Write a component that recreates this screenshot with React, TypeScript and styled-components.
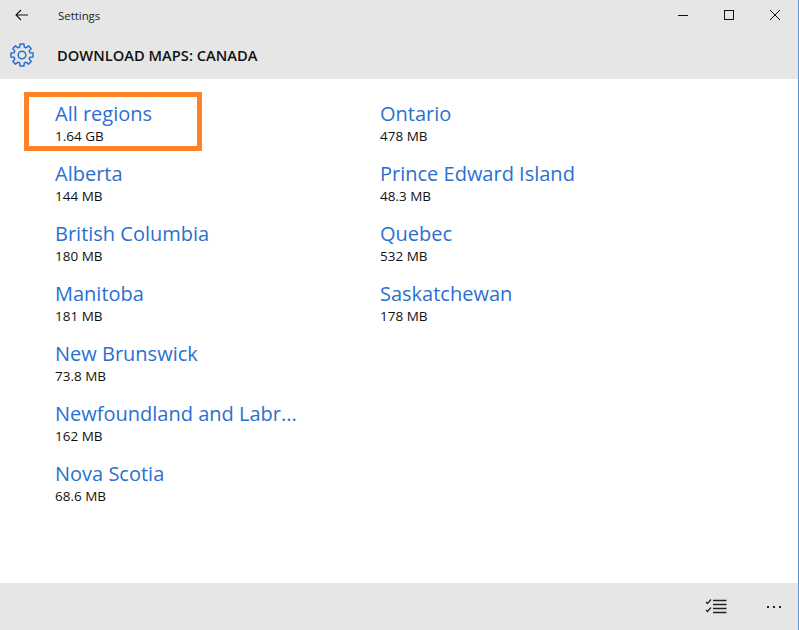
import React from "react";
import styled, { createGlobalStyle } from "styled-components";

const GlobalStyle = createGlobalStyle`
  html, body {
    margin: 0;
    padding: 0;
    background: #fff;
  }
  body {
    font-family: "Open Sans", "Noto Sans", "Liberation Sans", sans-serif;
  }
`;

const Window = styled.div`
  width: 799px;
  height: 630px;
  box-sizing: border-box;
  display: flex;
  flex-direction: column;
  overflow: hidden;
  color: #000;
  border-right: 1px solid #5f92d0;
`;

const TitleBar = styled.div`
  height: 30px;
  flex: none;
  display: flex;
  align-items: center;
  background: #e6e6e6;
`;

const BackButton = styled.div`
  width: 44px;
  height: 30px;
  display: flex;
  align-items: center;
  justify-content: center;
`;

const AppName = styled.div`
  margin-left: 14px;
  font-size: 11.4px;
  color: #222;
`;

const WindowControls = styled.div`
  margin-left: auto;
  display: flex;
`;

const WindowButton = styled.div`
  width: 46px;
  height: 30px;
  display: flex;
  align-items: center;
  justify-content: center;
`;

const Header = styled.div`
  height: 49px;
  flex: none;
  display: flex;
  align-items: center;
  background: #e6e6e6;
  padding-left: 10px;
  gap: 23px;
`;

const HeaderTitle = styled.h1`
  margin: 0;
  font-size: 14.7px;
  font-weight: 600;
  color: #111;
`;

const Content = styled.div`
  flex: 1;
  background: #fff;
  padding: 20px 0 0 55px;
`;

const RegionGrid = styled.div`
  display: grid;
  grid-auto-flow: column;
  grid-template-rows: repeat(7, 60px);
  grid-template-columns: repeat(2, 325px);
`;

const Region = styled.div`
  position: relative;
  min-width: 0;
`;

const RegionName = styled.div`
  font-size: 20px;
  line-height: 30px;
  color: #2b6fd0;
  white-space: nowrap;
`;

const RegionSize = styled.div`
  font-size: 13.5px;
  line-height: 14px;
  color: #111;
`;

const Highlight = styled.div`
  position: absolute;
  left: -31px;
  top: -7px;
  width: 178px;
  height: 59px;
  box-sizing: border-box;
  border: 5px solid #ff8227;
`;

const BottomBar = styled.div`
  height: 47px;
  flex: none;
  display: flex;
  align-items: center;
  justify-content: flex-end;
  gap: 12px;
  padding-right: 1px;
  background: #e6e6e6;
`;

const BarButton = styled.div`
  width: 46px;
  height: 47px;
  display: flex;
  align-items: center;
  justify-content: center;
`;

const regions = [
  { name: "All regions", size: "1.64 GB", selected: true },
  { name: "Alberta", size: "144 MB" },
  { name: "British Columbia", size: "180 MB" },
  { name: "Manitoba", size: "181 MB" },
  { name: "New Brunswick", size: "73.8 MB" },
  { name: "Newfoundland and Labr...", size: "162 MB" },
  { name: "Nova Scotia", size: "68.6 MB" },
  { name: "Ontario", size: "478 MB" },
  { name: "Prince Edward Island", size: "48.3 MB" },
  { name: "Quebec", size: "532 MB" },
  { name: "Saskatchewan", size: "178 MB" },
];

function GearIcon() {
  const teeth = [0, 45, 90, 135, 180, 225, 270, 315];
  const outer = 11.2;
  const inner = 8.2;
  const w = 0.17;
  const pts: string[] = [];
  teeth.forEach((deg) => {
    const a = (deg * Math.PI) / 180;
    const at = (r: number, o: number) =>
      `${(12 + r * Math.cos(a + o)).toFixed(2)} ${(12 + r * Math.sin(a + o)).toFixed(2)}`;
    pts.push(at(inner, -w * 1.7), at(outer, -w), at(outer, w), at(inner, w * 1.7));
  });
  return (
    <svg width="24" height="24" viewBox="0 0 24 24" fill="none" stroke="#2b6fd0" strokeWidth="1.5" strokeLinejoin="round">
      <path d={`M${pts.join("L")}Z`} />
      <circle cx="12" cy="12" r="3.8" />
    </svg>
  );
}

export default function App() {
  return (
    <Window>
      <GlobalStyle />
      <TitleBar>
        <BackButton>
          <svg width="14" height="12" viewBox="0 0 14 12" fill="none" stroke="#111" strokeWidth="1.1">
            <path d="M13 6H1M6 1 1 6l5 5" />
          </svg>
        </BackButton>
        <AppName>Settings</AppName>
        <WindowControls>
          <WindowButton>
            <svg width="10" height="10" viewBox="0 0 10 10" stroke="#111" strokeWidth="1">
              <path d="M0 5.5h10" />
            </svg>
          </WindowButton>
          <WindowButton>
            <svg width="10" height="10" viewBox="0 0 10 10" fill="none" stroke="#111" strokeWidth="1">
              <rect x="0.5" y="0.5" width="9" height="9" />
            </svg>
          </WindowButton>
          <WindowButton>
            <svg width="10" height="10" viewBox="0 0 10 10" stroke="#111" strokeWidth="1">
              <path d="M0 0l10 10M10 0 0 10" />
            </svg>
          </WindowButton>
        </WindowControls>
      </TitleBar>
      <Header>
        <GearIcon />
        <HeaderTitle>DOWNLOAD MAPS: CANADA</HeaderTitle>
      </Header>
      <Content>
        <RegionGrid>
          {regions.map((r) => (
            <Region key={r.name}>
              <RegionName>{r.name}</RegionName>
              <RegionSize>{r.size}</RegionSize>
              {r.selected && <Highlight />}
            </Region>
          ))}
        </RegionGrid>
      </Content>
      <BottomBar>
        <BarButton>
          <svg width="22" height="15" viewBox="0 0 22 15" fill="none" stroke="#222" strokeWidth="1">
            <path d="M8 1.5h13.5M8 5.5h13.5M8 9.5h13.5M8 13.5h13.5" stroke="#222" strokeWidth="1.4" />
            <path d="M1 3l1.5 1.5L6 0.5M1 11l1.5 1.5L6 8.5" strokeWidth="1.2" />
          </svg>
        </BarButton>
        <BarButton>
          <svg width="16" height="4" viewBox="0 0 16 4" fill="#222">
            <rect x="1" y="1" width="2" height="2" />
            <rect x="7" y="1" width="2" height="2" />
            <rect x="13" y="1" width="2" height="2" />
          </svg>
        </BarButton>
      </BottomBar>
    </Window>
  );
}
